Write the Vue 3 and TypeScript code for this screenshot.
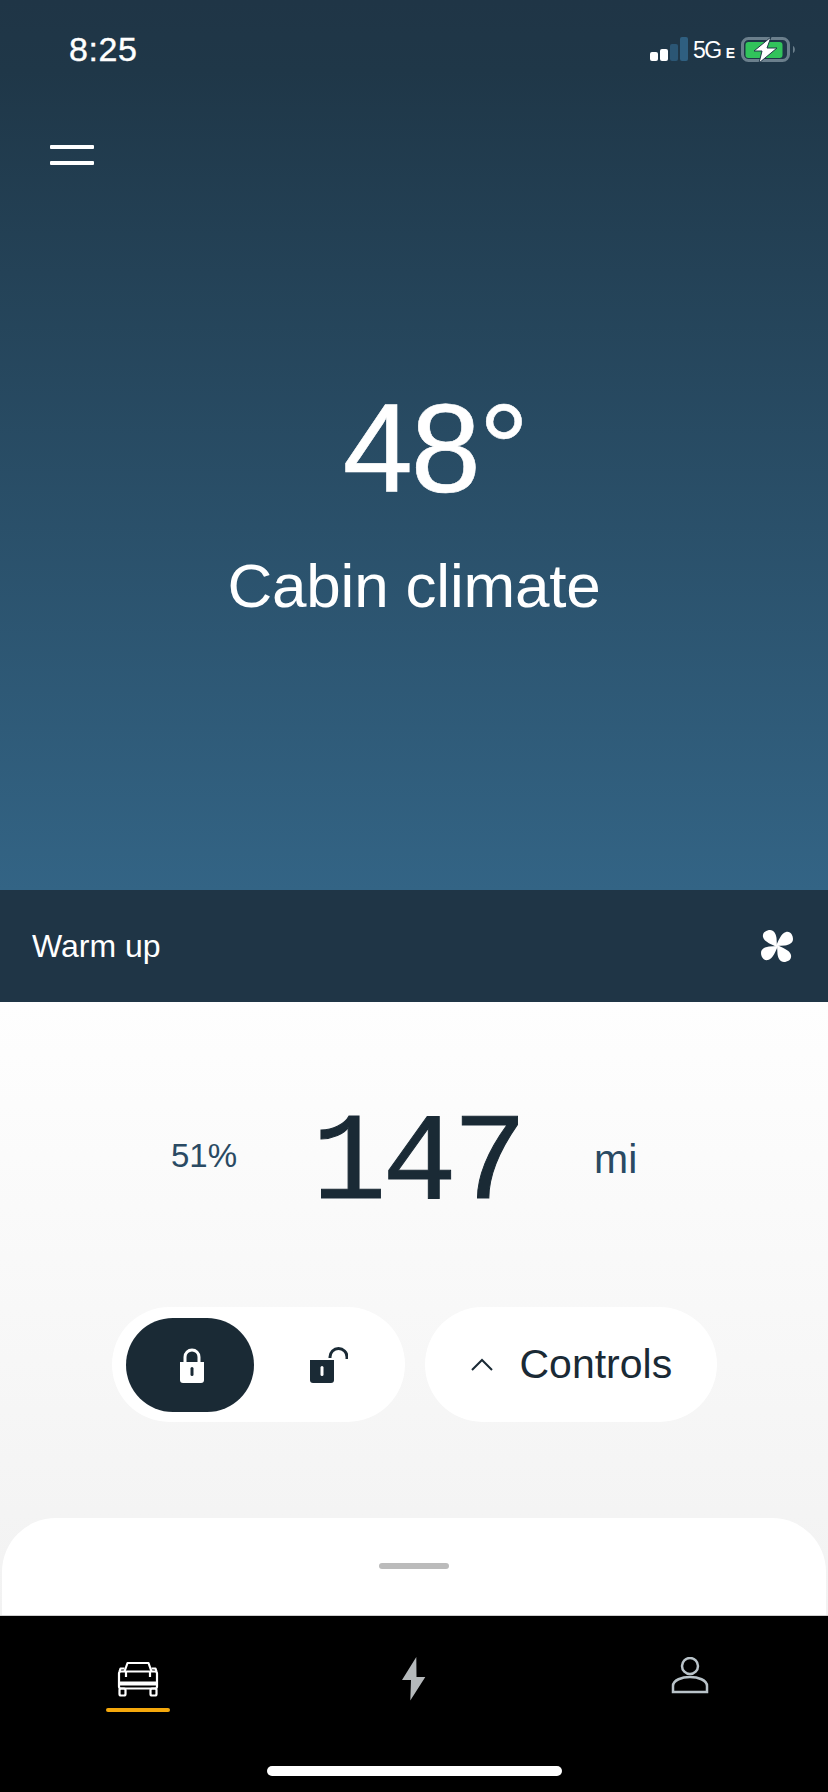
<script setup lang="ts">
const petals = [0, 90, 180, 270];
</script>

<template>
  <div class="screen">
    <section class="hero">
      <div class="status">
        <span class="time">8:25</span>
        <div class="status__right">
          <div class="signal">
            <i class="bar bar--1"></i>
            <i class="bar bar--2"></i>
            <i class="bar bar--3"></i>
            <i class="bar bar--4"></i>
          </div>
          <span class="net">5G</span>
          <span class="net-e">E</span>
          <svg class="battery" width="55" height="26" viewBox="0 0 55 26">
            <rect x="1.500" y="1.500" width="46" height="22" rx="6" fill="none" stroke="#6b7f8c" stroke-width="3" />
            <rect x="4.500" y="5" width="37" height="16" rx="3" fill="#31c35b" />
            <path d="M52 9c2.500 1 2.500 6 0 7z" fill="#6b7f8c" />
            <path d="M30 0 13 14h8l-3 12 18-15h-10z" fill="#fff" stroke="#1f3647" stroke-width="1" />
          </svg>
        </div>
      </div>
      <button type="button" class="menu" aria-label="Menu">
        <i></i>
        <i></i>
      </button>
      <div class="temp">48°</div>
      <div class="temp-label">Cabin climate</div>
    </section>

    <section class="warm">
      <span>Warm up</span>
      <svg width="32" height="32" viewBox="0 0 32 32">
        <g v-for="deg in petals" :key="deg" :transform="`rotate(${deg} 16 16)`">
          <path d="M16 17C12 15 3 12 2 7 1 2 6 0 9 0c4 0 6 4 6.500 8z" fill="#fff" />
        </g>
      </svg>
    </section>

    <main class="main">
      <div class="stats">
        <span class="stats__pct">51%</span>
        <span class="stats__range">147</span>
        <span class="stats__unit">mi</span>
      </div>

      <div class="actions">
        <div class="pill pill--lock">
          <div class="lock-btn lock-btn--on">
            <svg width="24" height="36" viewBox="0 0 24 36">
              <path d="M5 16V10a7 7 0 0 1 14 0v6" fill="none" stroke="#fff" stroke-width="3" />
              <path d="M0 15h24v18a3 3 0 0 1-3 3H3a3 3 0 0 1-3-3z" fill="#fff" />
              <rect x="10.500" y="20" width="3" height="9" rx="1.500" fill="#1a2a35" />
            </svg>
          </div>
          <div class="lock-btn lock-btn--off">
            <svg width="38" height="36" viewBox="0 0 38 36">
              <path d="M20 11V10a8.500 8.500 0 0 1 17 0v2" fill="none" stroke="#1a2a35" stroke-width="3" />
              <path d="M0 13h24v20a3 3 0 0 1-3 3H3a3 3 0 0 1-3-3z" fill="#1a2a35" />
              <rect x="10.500" y="19" width="3" height="10" rx="1.500" fill="#fff" />
            </svg>
          </div>
        </div>
        <div class="pill pill--controls">
          <svg width="22" height="13" viewBox="0 0 22 13">
            <path d="M1 12 11 2l10 10" fill="none" stroke="#1a2a35" stroke-width="2" />
          </svg>
          <span>Controls</span>
        </div>
      </div>

      <div class="sheet">
        <i class="sheet__handle"></i>
      </div>
    </main>

    <nav class="nav">
      <div class="tabs">
        <div class="tab">
          <svg width="48" height="44" viewBox="0 0 48 44" fill="none" stroke="#fff" stroke-width="2.200" stroke-linejoin="round">
            <path d="M10.500 14.500 13.500 6h21l3 8.500" />
            <path d="M10.500 11.500H6.500l-1 3M37.500 11.500h4l1 3" />
            <rect x="5" y="14.500" width="38" height="17" rx="2" />
            <path d="M5 25.500h38M5 27.500h38" />
            <path d="M12 15v5M36 15v5" />
            <rect x="5.500" y="31.500" width="6" height="7" rx="1.500" />
            <rect x="36.500" y="31.500" width="6" height="7" rx="1.500" />
          </svg>
          <i class="tab__underline"></i>
        </div>
        <div class="tab">
          <svg width="24" height="44" viewBox="0 0 24 44">
            <path d="M14.300 0 0 23h9l-.7 20.500L23.300 20h-8.800z" fill="#b5b9bb" />
          </svg>
        </div>
        <div class="tab">
          <svg width="40" height="44" viewBox="0 0 40 44" fill="none" stroke="#b9c3c9" stroke-width="2.500">
            <circle cx="20" cy="9" r="8" />
            <path d="M3 35v-6c0-6 9-9 17-9s17 3 17 9v6z" />
          </svg>
        </div>
      </div>
      <i class="home-bar"></i>
    </nav>
  </div>
</template>

<style>
html,
body {
  margin: 0;
  background: #000;
}
</style>

<style scoped>
.screen {
  width: 828px;
  height: 1792px;
  display: flex;
  flex-direction: column;
  overflow: hidden;
  font-family: "Liberation Sans", Arial, sans-serif;
}

.hero {
  height: 890px;
  flex: none;
  box-sizing: border-box;
  padding-top: 37px;
  background: linear-gradient(180deg, #1f3546 0%, #1f3748 8%, #336485 100%);
  color: #fff;
  text-align: center;
}

.status {
  display: flex;
  justify-content: space-between;
  align-items: flex-start;
  height: 25px;
  padding: 0 32px 0 69px;
}

.time {
  font-size: 34px;
  line-height: 25px;
  letter-spacing: 0.6px;
  -webkit-text-stroke: 0.4px #fff;
}

.status__right {
  display: flex;
  align-items: flex-start;
}

.signal {
  display: flex;
  align-items: flex-end;
  gap: 2px;
  height: 24px;
  margin-right: 5px;
}

.bar {
  display: block;
  width: 8px;
  border-radius: 2px;
}

.bar--1 {
  height: 9px;
  background: #fff;
}

.bar--2 {
  height: 12px;
  background: #fff;
}

.bar--3 {
  height: 17px;
  background: #2b5674;
}

.bar--4 {
  height: 24px;
  background: #2f5f80;
}

.net {
  font-size: 23px;
  line-height: 26px;
  letter-spacing: -1.5px;
  margin-right: 5px;
}

.net-e {
  font-size: 14px;
  font-weight: 700;
  line-height: 16px;
  margin: 8px 6px 0 0;
}

.battery {
  display: block;
}

.menu {
  display: flex;
  flex-direction: column;
  gap: 12px;
  width: 44px;
  margin: 83px 0 0 50px;
  padding: 0;
  border: 0;
  background: none;
}

.menu i {
  display: block;
  height: 4px;
  border-radius: 1px;
  background: #fff;
}

.temp {
  margin-top: 220px;
  padding-left: 42px;
  font-size: 126px;
  line-height: 128px;
  letter-spacing: -2px;
  -webkit-text-stroke: 0.6px #fff;
}

.temp-label {
  margin-top: 33px;
  font-size: 62px;
  line-height: 80px;
  letter-spacing: -0.2px;
}

.warm {
  height: 112px;
  flex: none;
  display: flex;
  align-items: center;
  justify-content: space-between;
  padding: 0 35px 0 32px;
  background: #1f3546;
  color: #fff;
  font-size: 32px;
}

.main {
  flex: 1;
  display: flex;
  flex-direction: column;
  padding-top: 101px;
  background: linear-gradient(180deg, #fefefe 0%, #f2f2f2 100%);
}

.stats {
  display: flex;
  align-items: flex-start;
  height: 125px;
  padding-left: 171px;
  color: #2a4a63;
}

.stats__pct {
  width: 141px;
  margin-top: 33px;
  font-size: 33px;
  line-height: 40px;
}

.stats__range {
  width: 282px;
  font-family: "Liberation Mono", monospace;
  font-size: 124px;
  line-height: 125px;
  letter-spacing: -4px;
  -webkit-text-stroke: 1px #1a2a35;
  color: #1a2a35;
}

.stats__unit {
  margin-top: 36px;
  font-size: 41px;
  line-height: 40px;
}

.actions {
  display: flex;
  justify-content: center;
  gap: 20px;
  margin-top: 79px;
}

.pill {
  width: 292px;
  height: 115px;
  box-sizing: border-box;
  display: flex;
  align-items: center;
  border-radius: 58px;
  background: #fff;
}

.pill--lock {
  width: 293px;
  padding-left: 14px;
}

.lock-btn {
  height: 94px;
  display: flex;
  align-items: center;
  justify-content: center;
}

.lock-btn svg {
  display: block;
}

.lock-btn--on {
  width: 128px;
  box-sizing: border-box;
  padding-left: 4px;
  border-radius: 47px;
  background: #1a2a35;
}

.lock-btn--off {
  margin-left: 56px;
}

.pill--controls {
  padding-left: 46px;
  gap: 27px;
  color: #1a2a35;
  font-size: 41px;
}

.sheet {
  margin: auto 2px 0;
  height: 97px;
  box-sizing: border-box;
  display: flex;
  justify-content: center;
  padding-top: 45px;
  border-radius: 54px 54px 0 0;
  background: #fff;
}

.sheet__handle {
  display: block;
  width: 70px;
  height: 6px;
  border-radius: 3px;
  background: #bbb;
}

.nav {
  height: 177px;
  flex: none;
  box-sizing: border-box;
  display: flex;
  flex-direction: column;
  align-items: center;
  border-top: 1px solid #cfcfcf;
  background: #000;
}

.tabs {
  display: grid;
  grid-template-columns: repeat(3, 276px);
  height: 150px;
  box-sizing: border-box;
  padding-top: 41px;
}

.tab {
  display: flex;
  flex-direction: column;
  align-items: center;
}

.tab svg {
  display: block;
}

.tab__underline {
  display: block;
  width: 64px;
  height: 4px;
  margin-top: 7px;
  border-radius: 2px;
  background: #f5a80c;
}

.home-bar {
  display: block;
  width: 295px;
  height: 10px;
  border-radius: 5px;
  background: #fff;
}
</style>
